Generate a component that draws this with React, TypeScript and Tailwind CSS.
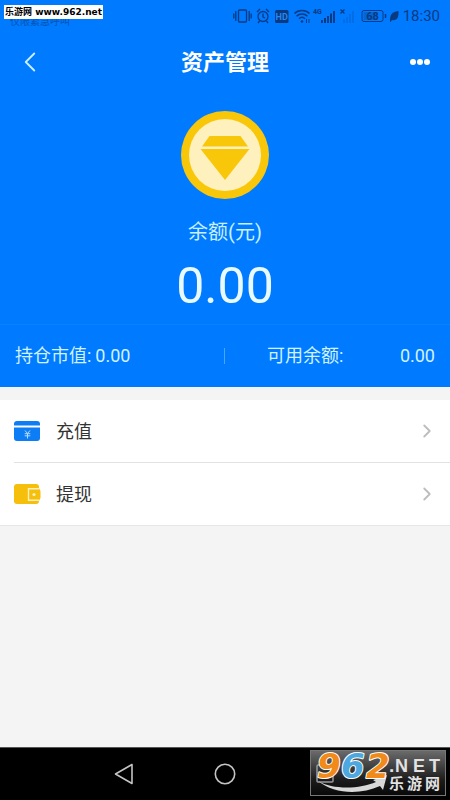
import { ChevronLeft, ChevronRight } from "lucide-react";

const rows = [
  { label: "充值", icon: <CardIcon /> },
  { label: "提现", icon: <WalletIcon /> },
];

function StatusIcons() {
  return (
    <svg width="166" height="20" viewBox="0 0 166 20" fill="none" stroke="#083a80" strokeWidth="1.3" className="overflow-visible" aria-hidden="true">
      {/* vibrate */}
      <rect x="5.5" y="4" width="8" height="12" rx="1" />
      <path d="M2.8 5v10M16.2 5v10M.8 7.500v5M18.200 7.500v5" />
      {/* alarm */}
      <circle cx="30" cy="10.500" r="5" />
      <path d="M30 7.500v3.500l2 1M24 6l3-3M36 6l-3-3M26.500 15l-1.500 2M33.500 15l1.500 2" />
      {/* hd */}
      <rect x="42" y="4" width="13.500" height="13" rx="1.500" fill="#083a80" stroke="none" />
      <text x="48.700" y="14" textAnchor="middle" fontSize="9" fontWeight="700" fill="#2a86f0" stroke="none">HD</text>
      {/* wifi */}
      <path d="M61.500 7.500c4-4 11-4 15 0M63.500 10.200c3-3 8-3 11 0M66 12.800c2-2 4-2 6 0" strokeWidth="1.500" />
      <circle cx="69" cy="15.500" r="1.200" fill="#083a80" stroke="none" />
      <path d="M73.500 13v4M76 13v4" strokeWidth="1" />
      {/* mobile signal */}
      <text x="80" y="8" fontSize="7" fontWeight="700" fill="#083a80" stroke="none">4G</text>
      <path d="M89 17v-3M92 17v-5M95 17v-7M98 17v-9.500M101 17V5" strokeWidth="1.900" />
      <path d="M107.500 3.500l4 4M111.500 3.500l-4 4" strokeWidth="1.300" />
      <path d="M111 17v-4M114 17v-6M117 17V8M120 17V5" strokeWidth="1.500" opacity=".25" />
      {/* battery */}
      <rect x="129" y="4.500" width="21" height="11" rx="2" strokeWidth="1" />
      <path d="M152.500 8v4" strokeWidth="1.500" />
      <rect x="130.500" y="6" width="13" height="8" fill="#083a80" opacity=".3" stroke="none" />
      <text x="139.500" y="14" textAnchor="middle" fontSize="11" fontWeight="700" fill="#083a80" stroke="none">68</text>
      {/* leaf */}
      <path d="M157 16c0-7 1-10 8.500-11 .5 7-2 10-6.500 9l-1.500 2z" fill="#083a80" stroke="none" />
    </svg>
  );
}

function Coin() {
  return (
    <svg width="88" height="88" viewBox="0 0 88 88" aria-hidden="true">
      <circle cx="44" cy="44" r="44" fill="#f9c70a" />
      <circle cx="44" cy="44" r="36" fill="#fff1bd" />
      <path d="M28.500 25h31L67 35.500H21z" fill="#f9c70a" />
      <path d="M19.500 38h49L44 69z" fill="#f9c70a" />
    </svg>
  );
}

function CardIcon() {
  return (
    <svg width="26" height="20" viewBox="0 0 26 20" aria-hidden="true">
      <path d="M3 0h20a3 3 0 0 1 3 3v1.500H0V3a3 3 0 0 1 3-3z" fill="#0c7df5" />
      <path d="M0 6.500h26V17a3 3 0 0 1-3 3H3a3 3 0 0 1-3-3z" fill="#0c7df5" />
      <path d="M11 9.500l2.500 3 2.500-3M10.700 12.700h5.600M10.700 14.800h5.600M13.500 12.500V17.500" fill="none" stroke="#b4dcff" strokeWidth="1" />
    </svg>
  );
}

function WalletIcon() {
  return (
    <svg width="27" height="20" viewBox="0 0 27 20" aria-hidden="true">
      <path d="M3 0h19a3 3 0 0 1 3 3v14a3 3 0 0 1-3 3H3a3 3 0 0 1-3-3V3a3 3 0 0 1 3-3z" fill="#f5bf0c" />
      <path d="M26 4.800H14.500v11.400H26" fill="#f5bf0c" stroke="#fff1bd" strokeWidth="1.400" />
      <path d="M24.500 5.500a2 2 0 0 1 2 2v6a2 2 0 0 1-2 2z" fill="#f5bf0c" />
      <circle cx="20" cy="10.500" r="1.600" fill="#fff1bd" />
    </svg>
  );
}

function SiteLogo() {
  return (
    <svg width="136" height="46" viewBox="0 0 136 46" className="block overflow-visible">
      <defs>
        <linearGradient id="plate" x1="0" y1="0" x2="0" y2="1">
          <stop offset="0" stopColor="#6c6c6c" />
          <stop offset="0.650" stopColor="#1c1c1c" />
          <stop offset="1" stopColor="#080808" />
        </linearGradient>
      </defs>
      <rect x=".5" y=".5" width="135" height="45" fill="url(#plate)" stroke="#777" />
      <rect x="7" y="15" width="16" height="17" rx="1" fill="none" stroke="#999" strokeWidth="1.500" />
      <path d="M8 31c15 9 42 8 58 1l-3-2 14-5-4 15-3-4c-20 9-46 8-62-5z" fill="#d8d8d8" />
      <g
        fontFamily="'DejaVu Sans', sans-serif"
        fontSize="34"
        fontWeight="700"
        fontStyle="italic"
        stroke="#fff"
        strokeWidth="2"
        strokeLinejoin="round"
        paintOrder="stroke"
      >
        <text x="7" y="28" fill="#f28a1a">9</text>
        <text x="31" y="28" fill="#4ea8e0">6</text>
        <text x="56" y="28" fill="#f28a1a">2</text>
      </g>
      <g fontFamily="'Liberation Sans', 'Noto Sans CJK SC', sans-serif" fontWeight="700" fill="#e2e2e2">
        <text x="79" y="22" fontSize="19">.</text>
        <text x="85" y="22" fontSize="18">N</text>
        <text x="103" y="22" fontSize="18">E</text>
        <text x="119" y="22" fontSize="18">T</text>
        <text x="79" y="39" fontSize="15">乐</text>
        <text x="97" y="39" fontSize="15">游</text>
        <text x="115" y="39" fontSize="15">网</text>
      </g>
    </svg>
  );
}

export default function App() {
  return (
    <div className="relative flex min-h-screen flex-col bg-[#f4f4f4] font-['Roboto','Noto_Sans_CJK_SC',sans-serif]">
      <div className="bg-[#007aff] text-[#e8faff]">
        <div className="flex h-8 items-center justify-between px-2.5 text-[#083a80]">
          <span className="self-end text-[10px] leading-5 opacity-60">仅限紧急呼叫</span>
          <div className="flex items-center gap-1">
            <StatusIcons />
            <span className="text-[15px] leading-5">18:30</span>
          </div>
        </div>

        <header className="flex h-15 items-center justify-between px-3.5">
          <button type="button" aria-label="返回" className="flex w-8 justify-center">
            <ChevronLeft size={34} strokeWidth={1.3} className="shrink-0 text-[#c8f0ff]" />
          </button>
          <h1 className="pt-0.5 text-[22px] leading-8 font-bold text-white">资产管理</h1>
          <button type="button" aria-label="更多" className="flex w-8 justify-center gap-px">
            <span className="size-1.5 rounded-full bg-white" />
            <span className="size-1.5 rounded-full bg-white" />
            <span className="size-1.5 rounded-full bg-white" />
          </button>
        </header>

        <section className="flex flex-col items-center pt-[19px] pb-2">
          <Coin />
          <p className="mt-[17px] text-xl leading-8 text-[#c8f0ff]">余额(元)</p>
          <p className="mt-2 text-[50px] leading-15">0.00</p>
        </section>

        <div className="flex h-[63px] items-center border-t border-[#0a82ff] text-lg leading-4 text-[#d0f3ff]">
          <div className="flex w-1/2 gap-1 border-r border-[#4aa5ff] pl-[15px]">
            <span>持仓市值:</span>
            <span>0.00</span>
          </div>
          <div className="flex w-1/2 justify-between pr-[15px] pl-[42px]">
            <span>可用余额:</span>
            <span>0.00</span>
          </div>
        </div>
      </div>

      <main className="mt-[13px] flex-1">
        <ul className="border-b border-[#e6e6e6] bg-white">
          {rows.map((r, i) => (
            <li key={r.label} className="pl-3.5">
              <a
                href="#"
                className={
                  i > 0
                    ? "flex h-[63px] items-center border-t border-[#e2e2e2] pr-3 text-[#333]"
                    : "flex h-[62px] items-center pr-3 text-[#333]"
                }
              >
                <span className="flex w-[42px]">{r.icon}</span>
                <span className="flex-1 pt-0.5 text-lg">{r.label}</span>
                <ChevronRight size={22} strokeWidth={2} className="text-[#bdbdbd]" />
              </a>
            </li>
          ))}
        </ul>
      </main>

      <nav className="flex h-[53px] items-center justify-around border-t border-[#555] bg-black px-[74px] text-[#c4c4c4]">
        <button type="button" aria-label="后退">
          <svg width="22" height="22" viewBox="0 0 22 22" fill="none" stroke="currentColor" strokeWidth="1.600" strokeLinejoin="round">
            <path d="M2.500 11L19 1.500v19z" />
          </svg>
        </button>
        <button type="button" aria-label="主页">
          <svg width="22" height="22" viewBox="0 0 22 22" fill="none" stroke="currentColor" strokeWidth="1.600">
            <circle cx="11" cy="11" r="9.700" />
          </svg>
        </button>
        <button type="button" aria-label="最近任务">
          <svg width="22" height="22" viewBox="0 0 22 22" fill="none" stroke="currentColor" strokeWidth="1.600">
            <rect x="2" y="2" width="18" height="18" />
          </svg>
        </button>
      </nav>

      {/* site badges */}
      <span className="absolute top-[5px] left-1 bg-white px-px font-['DejaVu_Sans','Noto_Sans_CJK_SC',sans-serif] text-[9px] leading-[14px] font-bold whitespace-nowrap text-black">
        乐游网 www.962.net
      </span>
      <div className="absolute right-1 bottom-1">
        <SiteLogo />
      </div>
    </div>
  );
}
